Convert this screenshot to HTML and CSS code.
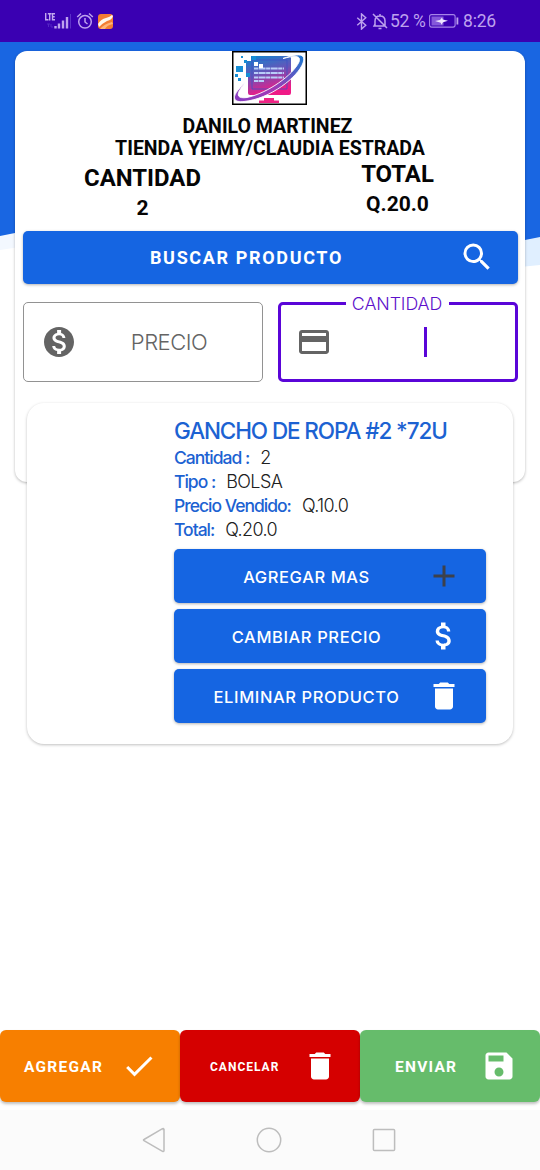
FILE: index.html
```html
<!DOCTYPE html>
<html lang="es">
<head>
<meta charset="utf-8">
<meta name="viewport" content="width=device-width, initial-scale=1">
<title>Venta</title>
<link rel="stylesheet" href="styles.css">
</head>
<body>
<svg width="0" height="0" class="symbols" aria-hidden="true">
  <symbol id="trash" viewBox="0 0 24 24"><path d="M6 19c0 1.100.9 2 2 2h8c1.100 0 2-.9 2-2V7H6v12zM19 4h-3.500l-1-1h-5l-1 1H5v2h14V4z"/></symbol>
</svg>
<div class="screen">
  <svg class="wave" viewBox="0 0 540 260" aria-hidden="true">
    <path d="M0 200H20V247L0 250Z" fill="#f3f8ff"/>
    <path d="M500 220H540V265L520 267Z" fill="#e0efff"/>
    <path d="M0 0H540V237L520 241V232H20L0 236Z" fill="#1966e2"/>
  </svg>
  <header class="status">
    <div class="status-left">
      <svg class="signal" viewBox="0 0 27 18">
        <path d="M1.700 1V7.800H4.500M3.800 1.700H7.500M5.700 1.700V8.500M11 1.700H8.500V7.800H11M8.500 4.700H10.700" fill="none" stroke="#c2a7ef" stroke-width="1.400"/>
        <path d="M3 12h3m-1.500 0v3M7 12v3h2" stroke="#5527c4" fill="none"/>
        <path d="M11.500 14v2.500M15 11.500v5M19 8.500v8M23 5v11.500" stroke="#bea2ee" stroke-width="2.400"/>
        <path d="M26.500 2v14.500" stroke="#5c31c8"/>
      </svg>
      <svg class="alarm" viewBox="0 0 18 18" fill="none" stroke="#bea2ee" stroke-width="1.500"><circle cx="9" cy="9.800" r="6.300"/><path d="M9 6V10l2.500 2M1.200 5L5 1.500M13 1.500L16.800 5"/></svg>
      <svg class="app" viewBox="0 0 15 15"><rect width="15" height="15" rx="3" fill="#f47d32"/><path d="M0 10Q3 5 8 4Q12 3 14 1L15 2Q14 6 9 7Q5 9 1 13Z" fill="#fff8ec"/><path d="M2 15Q6 10 14 8L15 10Q9 11 7 15Z" fill="#ffb679"/></svg>
    </div>
    <div class="status-right">
      <svg class="bt" viewBox="0 0 11 18" fill="none" stroke="#bea2ee" stroke-width="1.500"><path d="M1 5L10 13L5.500 17V1L10 5L1 13"/></svg>
      <svg class="bell" viewBox="0 0 16 17" fill="none" stroke="#bea2ee" stroke-width="1.500"><path d="M3 13V8Q3 3 8 3Q13 3 13 8V13H2L3 11M8 1V3M6.500 15.500h3M1 1L15 15"/></svg>
      <span class="percent">52 %</span>
      <svg class="battery" viewBox="0 0 30 14"><rect x=".6" y=".6" width="25.500" height="12.500" rx="2" fill="none" stroke="#a685e8" stroke-width="1.100"/><rect x="2.500" y="2.500" width="12" height="9" fill="#8458da"/><path d="M6 7l5-1 2-2.500.8 2L19 6.800l-5 1.400-1.500 2.500-.8-2z" fill="#eee6ff"/><rect x="27.500" y="3.500" width="1.800" height="7" fill="#bea2ee"/></svg>
      <span class="clock">8:26</span>
    </div>
  </header>

  <main class="content">
    <section class="panel">
      <svg class="logo" viewBox="0 0 75 54">
        <defs>
          <linearGradient id="pink" x1="0" y1="0" x2=".3" y2="1"><stop stop-color="#0b86d0"/><stop offset=".5" stop-color="#6655b9"/><stop offset="1" stop-color="#ef1a86"/></linearGradient>
          <linearGradient id="ring" gradientUnits="userSpaceOnUse" x1="8" y1="48" x2="70" y2="6"><stop stop-color="#8a3cc0"/><stop offset=".45" stop-color="#a337b5"/><stop offset="1" stop-color="#2076cf"/></linearGradient>
        </defs>
        <rect x=".75" y=".75" width="73.500" height="52.500" fill="#fff" stroke="#000" stroke-width="1.500"/>
        <path d="M19 5H57Q59 5 59 7V42Q59 44 57 44H18Q16 44 16 42V24H14V10H19Z" fill="url(#pink)"/>
        <path d="M20 9H55V38H20Z" fill="none" stroke="#3f51c5" stroke-width=".8"/>
        <path d="M22 17.500H52M22 22H52M22 26.500H52M22 30H32" stroke="#b9cdf8" stroke-width="2" stroke-dasharray="4 .6 7 .5"/>
        <path d="M13 5h6v5h-6zM22 11h4v4h-4zM27 13h4v4h-4z" fill="#fff"/>
        <path d="M4 15h7v6H4zM12 9h3v3h-3zM14 22h4v4h-4zM3 23h3v3H3zM20 5h4v4h-4zM6 27h3v3H6zM9 5h2v2H9z" fill="#168ed5"/>
        <path d="M14 31C0 43 -2 52 12 50.500C38 48 66 26 71 12C74 3 68 1.500 51 7.500C65 4 69 5 67 11C61 24 36 42 15 46.500C4 48 3 43 14 31Z" fill="url(#ring)" stroke="#fff" stroke-width=".9"/>
        <path d="M32 47H42V49.500H47V52H27V49.500H32Z" fill="#ef2384"/>
      </svg>
      <div class="seller">DANILO MARTINEZ</div>
      <div class="store">TIENDA YEIMY/CLAUDIA ESTRADA</div>
      <div class="totals">
        <div class="stat stat-qty"><span class="stat-name">CANTIDAD</span><span class="stat-value">2</span></div>
        <div class="stat stat-total"><span class="stat-name">TOTAL</span><span class="stat-value">Q.20.0</span></div>
      </div>
      <button class="btn search"><span>BUSCAR PRODUCTO</span><svg class="search-icon" viewBox="0 0 24 24"><path d="M15.500 14h-.79l-.28-.27A6.471 6.471 0 0 0 16 9.500 6.500 6.500 0 1 0 9.500 16c1.610 0 3.090-.59 4.230-1.570l.27.28v.79l5 4.990L20.490 19l-4.990-5zm-6 0C7.010 14 5 11.990 5 9.500S7.010 5 9.500 5 14 7.010 14 9.500 11.990 14 9.500 14z"/></svg></button>
      <div class="fields">
        <div class="field">
          <svg class="field-icon" viewBox="0 0 24 24"><path d="M12 2C6.480 2 2 6.480 2 12s4.480 10 10 10 10-4.480 10-10S17.520 2 12 2zm1.410 16.090V20h-2.670v-1.930c-1.710-.36-3.160-1.460-3.270-3.400h1.960c.1 1.050.82 1.870 2.650 1.870 1.960 0 2.400-.98 2.400-1.590 0-.83-.44-1.610-2.670-2.140-2.480-.6-4.180-1.620-4.180-3.670 0-1.720 1.390-2.840 3.110-3.210V4h2.670v1.950c1.860.45 2.790 1.860 2.850 3.390H14.300c-.05-1.110-.64-1.870-2.220-1.870-1.500 0-2.400.68-2.400 1.640 0 .84.65 1.390 2.670 1.910s4.180 1.390 4.180 3.910c-.01 1.830-1.380 2.830-3.120 3.160z"/></svg>
          <span class="hint">PRECIO</span>
        </div>
        <div class="field active">
          <span class="field-label">CANTIDAD</span>
          <svg class="field-icon" viewBox="0 0 24 24"><path d="M20 4H4c-1.110 0-1.990.89-1.990 2L2 18c0 1.110.89 2 2 2h16c1.110 0 2-.89 2-2V6c0-1.110-.89-2-2-2zm0 14H4v-6h16v6zm0-10H4V6h16v2z"/></svg>
          <span class="caret"></span>
        </div>
      </div>
    </section>

    <article class="product">
      <h2 class="product-name">GANCHO DE ROPA #2 *72U</h2>
      <p class="line"><b>Cantidad :</b><span>2</span></p>
      <p class="line"><b>Tipo :</b><span>BOLSA</span></p>
      <p class="line"><b>Precio Vendido:</b><span>Q.10.0</span></p>
      <p class="line"><b>Total:</b><span>Q.20.0</span></p>
      <div class="actions">
        <button class="btn action"><span>AGREGAR MAS</span><svg viewBox="0 0 24 24" class="dark"><path d="M19 13h-6v6h-2v-6H5v-2h6V5h2v6h6v2z"/></svg></button>
        <button class="btn action"><span>CAMBIAR PRECIO</span><svg viewBox="0 0 24 24"><path d="M11.800 10.900c-2.270-.59-3-1.200-3-2.150 0-1.090 1.010-1.850 2.700-1.850 1.780 0 2.440.85 2.500 2.100h2.210c-.07-1.720-1.120-3.300-3.210-3.810V3h-3v2.160c-1.940.42-3.500 1.680-3.500 3.610 0 2.310 1.910 3.460 4.700 4.130 2.500.6 3 1.480 3 2.410 0 .69-.49 1.790-2.700 1.790-2.060 0-2.870-.92-2.980-2.100h-2.200c.12 2.190 1.760 3.420 3.680 3.830V21h3v-2.150c1.950-.37 3.500-1.500 3.500-3.550 0-2.840-2.430-3.810-4.700-4.400z"/></svg></button>
        <button class="btn action"><span>ELIMINAR PRODUCTO</span><svg><use href="#trash"/></svg></button>
      </div>
    </article>
  </main>

  <footer class="bottom">
    <button class="btn add"><span>AGREGAR</span><svg viewBox="0 0 24 24"><path d="M9 16.170L4.830 12l-1.420 1.410L9 19 21 7l-1.410-1.410z"/></svg></button>
    <button class="btn cancel"><span>CANCELAR</span><svg><use href="#trash"/></svg></button>
    <button class="btn send"><span>ENVIAR</span><svg viewBox="0 0 24 24"><path d="M17 3H5c-1.110 0-2 .9-2 2v14c0 1.100.89 2 2 2h14c1.100 0 2-.9 2-2V7l-4-4zm-5 16c-1.660 0-3-1.340-3-3s1.340-3 3-3 3 1.340 3 3-1.340 3-3 3zm3-10H5V5h10v4z"/></svg></button>
  </footer>
  <nav class="nav">
    <svg viewBox="0 0 28 28"><path d="M23.500 3.500Q24 2 22.500 2.700L4 13.500Q3 14 4 14.600L22.500 25.300Q24 26 24 24.500V3.500Z"/></svg>
    <svg viewBox="0 0 28 28"><circle cx="14" cy="14" r="11.700"/></svg>
    <svg viewBox="0 0 28 28"><rect x="3.400" y="3.400" width="21.200" height="21.200" rx="1"/></svg>
  </nav>
</div>
</body>
</html>
```
FILE: styles.css
```css
* { box-sizing: border-box; }
body { margin: 0; background: #fff; font-family: Roboto, "Liberation Sans", sans-serif; }
.symbols { position: absolute; }
.screen { position: relative; isolation: isolate; width: 540px; height: 1170px; display: flex; flex-direction: column; overflow: hidden; background: #fff; }
.wave { position: absolute; z-index: -1; top: 0; left: 0; width: 540px; height: 260px; overflow: visible; }
svg { display: block; flex: none; }

.status { height: 42px; flex: none; background: #3a00b2; display: flex; justify-content: space-between; padding: 0 43px 0 44px; color: #bea2ee; font-size: 17.500px; }
.status-left, .status-right { display: flex; align-items: center; }
.signal { width: 27px; height: 18px; margin-top: -1px; }
.alarm { width: 18px; height: 18px; margin-left: 5px; }
.app { width: 15px; height: 15px; margin-left: 4px; }
.bt { width: 11px; height: 17px; margin-right: 5px; }
.bell { width: 16px; height: 17px; margin-right: 2px; }
.percent { width: 39px; white-space: nowrap; letter-spacing: -.3px; }
.battery { width: 30px; height: 14px; margin-right: 4px; }
.clock { width: 34px; letter-spacing: -.2px; }

.content { flex: 1; padding: 9px 15px 0; }
.panel { height: 431px; background: #fff; border-radius: 12px; padding: 0 7px; box-shadow: 0 1px 3px rgba(0,0,0,.28); display: flex; flex-direction: column; align-items: center; }
.logo { width: 75px; height: 54px; margin-right: 1px; }
.seller, .store { font-weight: 700; font-size: 19.500px; line-height: 22px; white-space: nowrap; color: #050505; }
.seller { margin-top: 11px; margin-left: -5px; }
.totals { width: 100%; height: 59px; margin-top: -1px; display: grid; grid-template-columns: 1fr 1fr; font-weight: 700; color: #050505; }
.stat { display: flex; flex-direction: column; align-items: center; line-height: 30px; }
.stat-qty { padding: 4px 7px 0 0; }
.stat-total { padding-left: 7px; }
.stat-name { font-size: 23.900px; }
.stat-value { font-size: 21px; }

.btn { border: 0; border-radius: 5px; padding: 0; margin: 0; color: #fff; background: #1565e2; display: flex; align-items: center; box-shadow: 0 1px 3px rgba(0,0,0,.3); white-space: nowrap; }
.btn svg { fill: currentColor; }
.search { width: 495px; height: 53.500px; margin-top: 12.500px; flex: none; font: 700 18px Roboto, sans-serif; letter-spacing: 1.650px; }
.search span { flex: 1; text-align: center; padding-left: 12px; }
.search-icon { width: 36px; height: 36px; margin-right: 23px; }

.fields { width: 495px; display: grid; grid-template-columns: 240px 240px; justify-content: space-between; margin-top: 17.500px; font-family: Inter, sans-serif; }
.field { position: relative; height: 80px; border: 1px solid #929292; border-radius: 5px; display: flex; align-items: center; padding-left: 17px; color: #646464; }
.field-icon { width: 36px; height: 36px; fill: #646464; }
.hint { flex: 1; text-align: center; font-size: 22px; font-weight: 300; letter-spacing: -.5px; }
.active { border: 3px solid #5a05d8; padding-left: 15px; }
.field-label { position: absolute; top: -12px; left: 65px; width: 103px; line-height: 22px; text-align: center; background: #fff; color: #5d10cb; font-size: 17.800px; letter-spacing: -.1px; font-weight: 300; }
.caret { width: 3px; height: 30px; background: #5a05d8; margin: 0 auto; position: relative; left: 2px; }

.product { height: 341px; margin: -79px 12px 0; padding: 14px 27px 0 147px; background: #fff; border-radius: 17px; box-shadow: 0 1px 3px rgba(0,0,0,.25); font-family: Inter, sans-serif; }
.product-name { margin: 0 0 1px; font-size: 22.500px; line-height: 28px; font-weight: 500; letter-spacing: -1.120px; color: #1c62d2; white-space: nowrap; }
.line { margin: 0; display: flex; line-height: 24px; font-size: 18px; letter-spacing: -.6px; color: #202020; white-space: nowrap; }
.line span { font-weight: 350; }
.line b { font-weight: 500; font-size: 17.500px; letter-spacing: -1px; color: #1c62d2; margin-right: 11px; }
.actions { display: grid; gap: 6px; margin-top: 6.500px; }
.action { height: 54px; font: 500 16.500px Inter, sans-serif; letter-spacing: .600px; }
.action span { flex: 1; text-align: center; padding: 2px 0 0 13px; }
.action svg { width: 36px; height: 36px; margin-right: 24px; }
.action .dark { fill: #3d414a; }

.bottom { display: grid; grid-template-columns: 1fr 1fr 1fr; height: 72px; flex: none; }
.bottom .btn { font: 700 15.500px Roboto, sans-serif; letter-spacing: 1.250px; border-radius: 6px; box-shadow: 0 2px 3px rgba(0,0,0,.25); }
.bottom .btn span { padding-top: 1px; }
.bottom .add { background: #f77f00; padding-left: 24px; }
.bottom .cancel { background: #d50000; font-size: 12px; letter-spacing: 1px; padding-left: 30px; }
.bottom .send { background: #66bc6b; padding-left: 35px; }
.bottom svg { width: 36px; height: 36px; margin-left: auto; }
.add svg { margin-right: 23px; }
.cancel svg { margin-right: 22px; }
.send svg { margin-right: 23px; }

.nav { height: 68px; flex: none; padding: 8px 142px 0 140px; background: linear-gradient(transparent 8px, #fbfbfb 8px); display: flex; align-items: center; justify-content: space-between; }
.nav svg { width: 28px; height: 28px; fill: none; stroke: #bdbdbd; stroke-width: 1.500; }
```
